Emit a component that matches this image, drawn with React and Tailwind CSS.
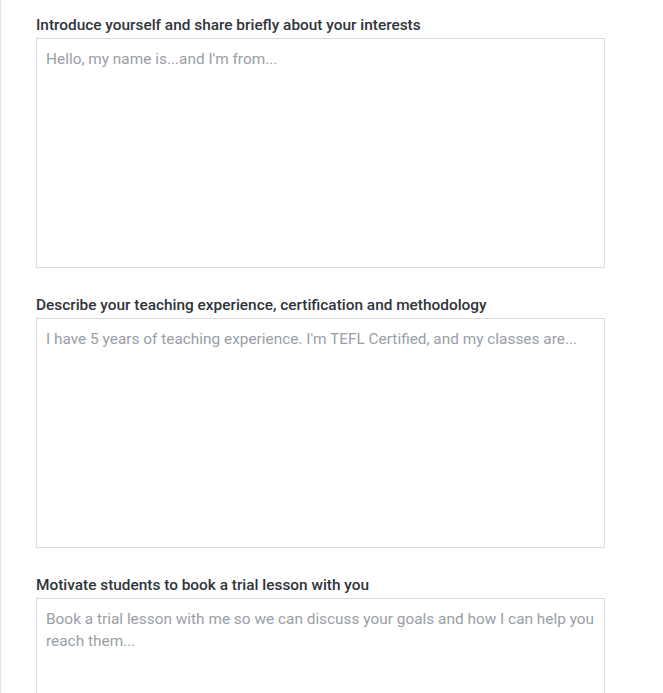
import React from "react";

const fields = [
  {
    label: "Introduce yourself and share briefly about your interests",
    placeholder: "Hello, my name is...and I'm from...",
  },
  {
    label: "Describe your teaching experience, certification and methodology",
    placeholder:
      "I have 5 years of teaching experience. I'm TEFL Certified, and my classes are...",
  },
  {
    label: "Motivate students to book a trial lesson with you",
    placeholder:
      "Book a trial lesson with me so we can discuss your goals and how I can help you reach them...",
  },
];

export default function App() {
  return (
    <div
      className="h-[693px] overflow-hidden bg-white border-l border-[#e6e6e6] pl-[35px] pt-[14px]"
      style={{ fontFamily: "Roboto, 'Noto Sans', sans-serif" }}
    >
      <div className="flex flex-col gap-[26px] w-[569px]">
        {fields.map((f, index) => (
          <div key={index} className="flex flex-col gap-[2px]">
            <label className="text-[15.4px] leading-[22px] font-medium text-[#2f343b]">
              {f.label}
            </label>
            <textarea
              className="h-[230px] w-full resize-none border border-[#dcdcdc] pl-[9px] pr-2 pt-[9px] pb-2 text-[15.4px] leading-[22px] text-[#333] placeholder:text-[#9a9ea5] outline-none"
              placeholder={f.placeholder}
            />
          </div>
        ))}
      </div>
    </div>
  );
}
